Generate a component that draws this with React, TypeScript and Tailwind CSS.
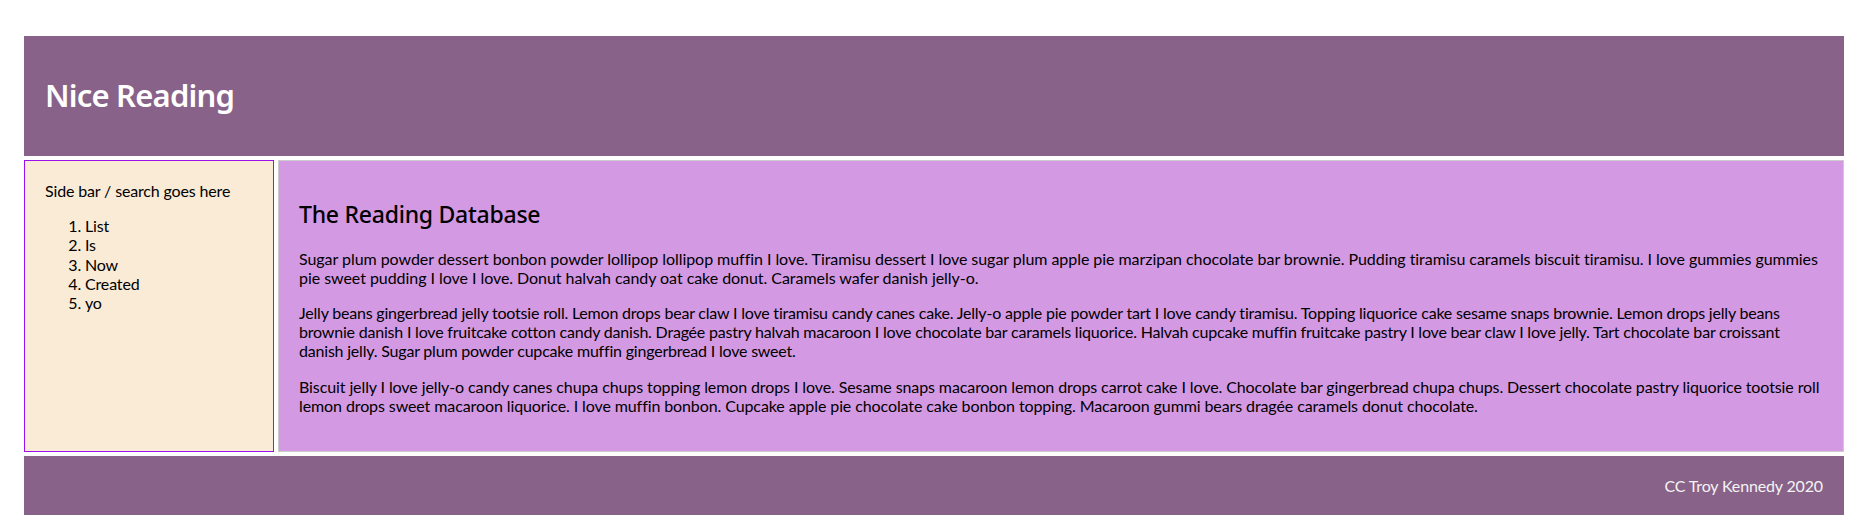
const sideItems = ["List", "Is", "Now", "Created", "yo"];

const paragraphs = [
  {
    tracking: "tracking-[-0.05px]",
    text: "Sugar plum powder dessert bonbon powder lollipop lollipop muffin I love. Tiramisu dessert I love sugar plum apple pie marzipan chocolate bar brownie. Pudding tiramisu caramels biscuit tiramisu. I love gummies gummies pie sweet pudding I love I love. Donut halvah candy oat cake donut. Caramels wafer danish jelly-o.",
  },
  {
    tracking: "tracking-[-0.2px]",
    text: "Jelly beans gingerbread jelly tootsie roll. Lemon drops bear claw I love tiramisu candy canes cake. Jelly-o apple pie powder tart I love candy tiramisu. Topping liquorice cake sesame snaps brownie. Lemon drops jelly beans brownie danish I love fruitcake cotton candy danish. Dragée pastry halvah macaroon I love chocolate bar caramels liquorice. Halvah cupcake muffin fruitcake pastry I love bear claw I love jelly. Tart chocolate bar croissant danish jelly. Sugar plum powder cupcake muffin gingerbread I love sweet.",
  },
  {
    tracking: "tracking-[-0.1px]",
    text: "Biscuit jelly I love jelly-o candy canes chupa chups topping lemon drops I love. Sesame snaps macaroon lemon drops carrot cake I love. Chocolate bar gingerbread chupa chups. Dessert chocolate pastry liquorice tootsie roll lemon drops sweet macaroon liquorice. I love muffin bonbon. Cupcake apple pie chocolate cake bonbon topping. Macaroon gummi bears dragée caramels donut chocolate.",
  },
];

const App = () => {
  return (
    <div className="min-h-[531px] bg-white pt-9 pl-6 pr-[26px] font-['Lato',sans-serif] text-[16px] leading-[1.2] tracking-[-0.15px] text-black">
      <div className="grid grid-cols-[250px_1fr] grid-rows-[120px_auto_59px] gap-1">
        <header className="col-span-2 flex items-center bg-[#886288] pl-[21px]">
          <h1 className="font-['Noto_Sans',sans-serif] text-[31px] font-semibold tracking-[-0.8px] text-white">
            Nice Reading
          </h1>
        </header>

        <aside className="border border-[#9c10ee] bg-[#faebd7] p-5">
          <p>Side bar / search goes here</p>
          <ol className="mt-4 list-decimal pl-10">
            {sideItems.map((item) => (
              <li key={item}>{item}</li>
            ))}
          </ol>
        </aside>

        <main className="border border-[#cccccc] bg-[#d399e3] p-5">
          <h2 className="mt-5 mb-5 font-['Noto_Sans',sans-serif] text-[23px] font-medium leading-[1.2] tracking-[-0.25px]">
            The Reading Database
          </h2>
          {paragraphs.map((para, i) => (
            <p key={i} className={`mb-4 ${para.tracking}`}>
              {para.text}
            </p>
          ))}
        </main>

        <footer className="col-span-2 flex items-center justify-end bg-[#886288] pr-[21px] text-[#f4f4f4]">
          CC Troy Kennedy 2020
        </footer>
      </div>
    </div>
  );
};

export default App;
